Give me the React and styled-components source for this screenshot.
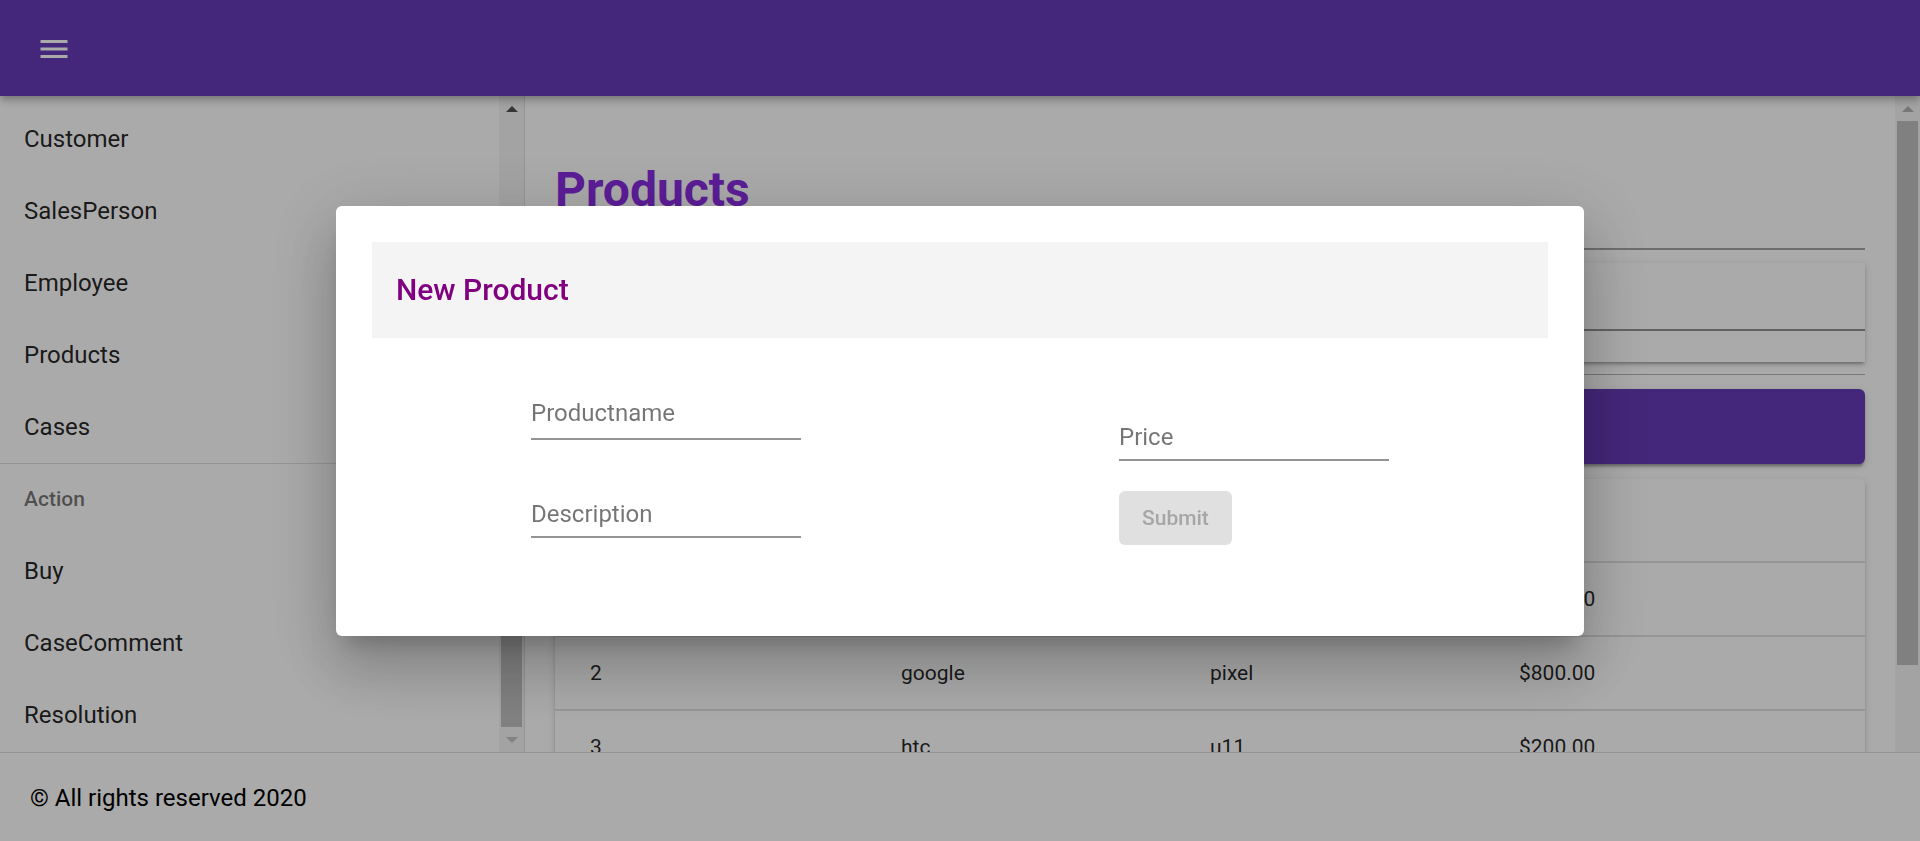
import React from 'react';
import styled, { createGlobalStyle } from 'styled-components';

const colors = {
    primary: '#673ab7',
    heading: 'blueviolet',
    dialogTitle: '#800080',
    text: 'rgba(0, 0, 0, 0.87)',
    muted: 'rgba(0, 0, 0, 0.54)',
    line: '#e0e0e0',
    underline: 'rgba(0, 0, 0, 0.42)',
    white: '#ffffff',
};

const GlobalStyle = createGlobalStyle`
    *, *::before, *::after {
        box-sizing: border-box;
    }
    html, body {
        margin: 0;
        height: 100%;
        overflow: hidden;
    }
    body {
        font-family: Roboto, "Liberation Sans", Arial, sans-serif;
        background: ${colors.white};
        color: ${colors.text};
    }
`;

const Page = styled.div`
    display: flex;
    flex-direction: column;
    height: 100vh;
`;

const AppBar = styled.header`
    height: 96px;
    flex: none;
    display: flex;
    align-items: center;
    padding: 2px 0 0 18px;
    background: ${colors.primary};
    box-shadow: 0 3px 6px -1px rgba(0, 0, 0, 0.2), 0 6px 8px 0 rgba(0, 0, 0, 0.14);
    position: relative;
    z-index: 2;
`;

const MenuButton = styled.button`
    width: 72px;
    height: 72px;
    padding: 18px;
    border: 0;
    background: none;
    color: ${colors.white};
    display: flex;
    align-items: center;
    justify-content: center;
`;

const Body = styled.div`
    flex: 1;
    display: flex;
    min-height: 0;
`;

const Drawer = styled.nav`
    width: 525px;
    flex: none;
    display: flex;
    border-right: 1px solid rgba(0, 0, 0, 0.12);
    overflow: hidden;
`;

const NavList = styled.ul`
    flex: 1;
    margin: 0;
    padding: 7px 0 0;
    list-style: none;
    overflow: hidden;
`;

const NavItem = styled.li`
    height: 72px;
    display: flex;
    align-items: center;
    padding: 0 24px;
    font-size: 24px;
    line-height: 1.5;
    color: ${colors.text};
`;

const NavSubheader = styled(NavItem)`
    font-size: 21px;
    font-weight: 500;
    color: ${colors.muted};
    border-top: 1px solid ${colors.line};
`;

const ScrollTrack = styled.div`
    width: 25px;
    flex: none;
    display: flex;
    flex-direction: column;
    background: #f5f5f5;
`;

const ScrollArrow = styled.div`
    height: 25px;
    flex: none;
    display: flex;
    align-items: center;
    justify-content: center;
    margin-top: ${(p) => (p.$end ? 'auto' : '0')};
    &::before {
        content: '';
        border-left: 6px solid transparent;
        border-right: 6px solid transparent;
        ${(p) =>
            p.$dir === 'down'
                ? `border-top: 6px solid ${p.$color};`
                : `border-bottom: 6px solid ${p.$color};`}
    }
`;

const ScrollThumb = styled.div`
    flex: none;
    margin: ${(p) => p.$offset}px 2px 0;
    height: ${(p) => p.$size}px;
    background: #c1c1c1;
`;

const Main = styled.main`
    flex: 1;
    display: flex;
    min-width: 0;
    overflow: hidden;
`;

const Content = styled.div`
    flex: 1;
    min-width: 0;
    display: flex;
    flex-direction: column;
    padding: 65px 30px 0;
`;

const PageTitle = styled.h1`
    margin: 0;
    font-size: 48px;
    font-weight: 700;
    line-height: 1.2;
    color: ${colors.heading};
`;

const Rule = styled.hr`
    width: 100%;
    border: 0;
    border-top: ${(p) => p.$weight}px solid ${(p) => p.$color};
    margin: ${(p) => p.$top}px 0 ${(p) => p.$bottom}px;
    flex: none;
`;

const Paper = styled.div`
    background: ${colors.white};
    box-shadow: 0 3px 2px -2px rgba(0, 0, 0, 0.2), 0 3px 3px 0 rgba(0, 0, 0, 0.14),
        0 2px 8px 0 rgba(0, 0, 0, 0.12);
    flex: none;
`;

const SearchCard = styled(Paper)`
    height: 99px;
    padding-bottom: 31px;
`;

const SearchField = styled.div`
    height: 68px;
    display: flex;
    align-items: flex-end;
    padding: 0 0 14px 24px;
    border-bottom: 2px solid ${colors.underline};
    font-size: 24px;
    color: ${colors.muted};
`;

const AddButton = styled.button`
    height: 75px;
    flex: none;
    border: 0;
    border-radius: 6px;
    background: ${colors.primary};
    color: ${colors.white};
    font-family: inherit;
    font-size: 21px;
    font-weight: 500;
    letter-spacing: 0.6px;
    text-transform: uppercase;
    box-shadow: 0 4px 2px -2px rgba(0, 0, 0, 0.2), 0 3px 3px 0 rgba(0, 0, 0, 0.14),
        0 2px 8px 0 rgba(0, 0, 0, 0.12);
    margin-bottom: 15px;
`;

const TableCard = styled(Paper)`
    border-radius: 6px 6px 0 0;
`;

const TableRow = styled.div`
    display: grid;
    grid-template-columns: 311px 309px 309px 1fr;
    align-items: center;
    height: ${(p) => (p.$head ? 84 : 74)}px;
    padding-left: 35px;
    border-bottom: 2px solid ${colors.line};
    font-size: 21px;
    font-weight: ${(p) => (p.$head ? 500 : 400)};
    color: ${colors.text};
`;

const Footer = styled.footer`
    height: 89px;
    flex: none;
    display: flex;
    align-items: center;
    padding: 2px 0 0 30px;
    border-top: 1px solid ${colors.line};
    font-size: 24px;
    color: #000;
    background: ${colors.white};
`;

const Backdrop = styled.div`
    position: fixed;
    inset: 0;
    z-index: 10;
    display: flex;
    align-items: center;
    justify-content: center;
    background: rgba(0, 0, 0, 0.333);
`;

const Dialog = styled.div`
    width: 1248px;
    min-height: 430px;
    padding: 36px;
    border-radius: 6px;
    background: ${colors.white};
    box-shadow: 0 16px 22px -10px rgba(0, 0, 0, 0.2), 0 36px 57px 4px rgba(0, 0, 0, 0.14),
        0 14px 69px 12px rgba(0, 0, 0, 0.12);
`;

const DialogHeader = styled.div`
    height: 96px;
    display: flex;
    align-items: center;
    padding-left: 24px;
    background: #f4f4f4;
`;

const DialogTitle = styled.h2`
    margin: 0;
    font-size: 30px;
    font-weight: 500;
    color: ${colors.dialogTitle};
`;

const FormGrid = styled.form`
    display: grid;
    grid-template-columns: 1fr 1fr;
    min-height: 262px;
`;

const FormColumn = styled.div`
    justify-self: center;
    width: 270px;
    display: flex;
    flex-direction: column;
    align-items: flex-start;
    padding-top: ${(p) => p.$top}px;
    gap: ${(p) => p.$gap}px;
`;

const Field = styled.div`
    position: relative;
    width: 270px;
    padding-top: 24px;
`;

const FieldLabel = styled.label`
    position: absolute;
    left: 0;
    top: ${(p) => p.$top || 36}px;
    font-size: 24px;
    line-height: 1;
    color: ${colors.muted};
    pointer-events: none;
`;

const FieldInput = styled.input`
    display: block;
    width: 100%;
    height: 48px;
    padding: 9px 0 10px;
    border: 0;
    border-bottom: 2px solid ${colors.underline};
    background: transparent;
    font-family: inherit;
    font-size: 24px;
    outline: none;
`;

const SubmitButton = styled.button`
    height: 54px;
    padding: 0 23px;
    border: 0;
    border-radius: 6px;
    background: #e0e0e0;
    color: #a6a6a6;
    font-family: inherit;
    font-size: 21px;
    font-weight: 500;
`;

const navTop = ['Customer', 'SalesPerson', 'Employee', 'Products', 'Cases'];
const navActions = ['Buy', 'CaseComment', 'Resolution'];

const products = [
    { id: 1, name: 'apple', description: 'iphone', price: '$900.00' },
    { id: 2, name: 'google', description: 'pixel', price: '$800.00' },
    { id: 3, name: 'htc', description: 'u11', price: '$200.00' },
];

function MenuIcon() {
    return (
        <svg width="36" height="36" viewBox="0 0 24 24" fill="currentColor">
            <path d="M3 18h18v-2H3v2zm0-5h18v-2H3v2zm0-7v2h18V6H3z" />
        </svg>
    );
}

function App() {
    return (
        <>
            <GlobalStyle />
            <Page>
                <AppBar>
                    <MenuButton aria-label="menu">
                        <MenuIcon />
                    </MenuButton>
                </AppBar>
                <Body>
                    <Drawer>
                        <NavList>
                            {navTop.map((item) => (
                                <NavItem key={item}>{item}</NavItem>
                            ))}
                            <NavSubheader>Action</NavSubheader>
                            {navActions.map((item) => (
                                <NavItem key={item}>{item}</NavItem>
                            ))}
                        </NavList>
                        <ScrollTrack>
                            <ScrollArrow $dir="up" $color="#505050" />
                            <ScrollThumb $offset={209} $size={397} />
                            <ScrollArrow $dir="down" $color="#c4c4c4" $end />
                        </ScrollTrack>
                    </Drawer>
                    <Main>
                        <Content>
                            <PageTitle>Products</PageTitle>
                            <Rule $weight={2} $color="#a4a4a4" $top={29} $bottom={13} />
                            <SearchCard>
                                <SearchField>Search</SearchField>
                            </SearchCard>
                            <Rule $weight={1} $color="#b3b3b3" $top={12} $bottom={14} />
                            <AddButton>Add Product</AddButton>
                            <TableCard>
                                <TableRow $head>
                                    <span>Id</span>
                                    <span>Name</span>
                                    <span>Description</span>
                                    <span>Price</span>
                                </TableRow>
                                {products.map((p) => (
                                    <TableRow key={p.id}>
                                        <span>{p.id}</span>
                                        <span>{p.name}</span>
                                        <span>{p.description}</span>
                                        <span>{p.price}</span>
                                    </TableRow>
                                ))}
                            </TableCard>
                        </Content>
                        <ScrollTrack>
                            <ScrollArrow $dir="up" $color="#b3b3b3" />
                            <ScrollThumb $offset={0} $size={544} />
                        </ScrollTrack>
                    </Main>
                </Body>
                <Footer>© All rights reserved 2020</Footer>
            </Page>
            <Backdrop>
                <Dialog role="dialog">
                    <DialogHeader>
                        <DialogTitle>New Product</DialogTitle>
                    </DialogHeader>
                    <FormGrid>
                        <FormColumn $top={30} $gap={26}>
                            <Field>
                                <FieldLabel htmlFor="productname" $top={33}>
                                    Productname
                                </FieldLabel>
                                <FieldInput id="productname" />
                            </Field>
                            <Field>
                                <FieldLabel htmlFor="description">Description</FieldLabel>
                                <FieldInput id="description" />
                            </Field>
                        </FormColumn>
                        <FormColumn $top={51} $gap={30}>
                            <Field>
                                <FieldLabel htmlFor="price">Price</FieldLabel>
                                <FieldInput id="price" />
                            </Field>
                            <SubmitButton type="button" disabled>
                                Submit
                            </SubmitButton>
                        </FormColumn>
                    </FormGrid>
                </Dialog>
            </Backdrop>
        </>
    );
}

export default App;
